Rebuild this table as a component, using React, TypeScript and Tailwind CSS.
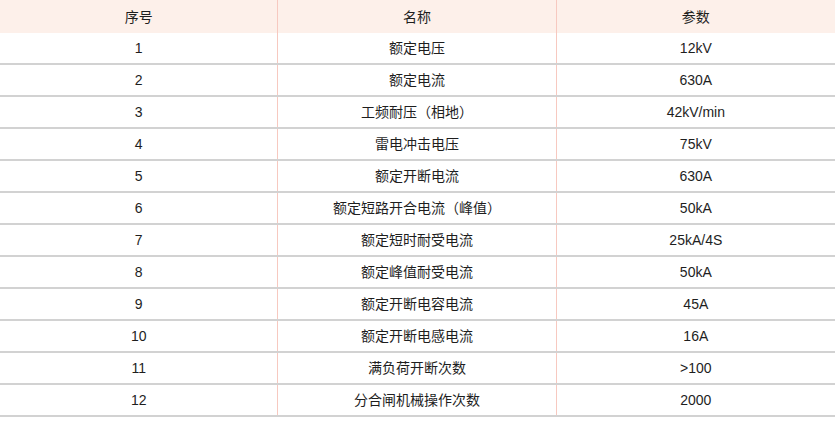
const rows: [string, string, string][] = [
  ["1", "额定电压", "12kV"],
  ["2", "额定电流", "630A"],
  ["3", "工频耐压（相地）", "42kV/min"],
  ["4", "雷电冲击电压", "75kV"],
  ["5", "额定开断电流", "630A"],
  ["6", "额定短路开合电流（峰值）", "50kA"],
  ["7", "额定短时耐受电流", "25kA/4S"],
  ["8", "额定峰值耐受电流", "50kA"],
  ["9", "额定开断电容电流", "45A"],
  ["10", "额定开断电感电流", "16A"],
  ["11", "满负荷开断次数", ">100"],
  ["12", "分合闸机械操作次数", "2000"],
];

const cell = "flex items-center justify-center pt-px border-r border-[#f7c9c0] last:border-r-0";

export default function App() {
  return (
    <div
      className="w-[835px] h-[421px] bg-white text-[14px] text-[#1e1e1e]"
      style={{ fontFamily: '"Liberation Sans", "Noto Sans CJK SC", sans-serif' }}
    >
      <div className="grid grid-cols-3 h-[33px] bg-[#fdf0ea]">
        <div className={cell}>序号</div>
        <div className={cell}>名称</div>
        <div className={cell}>参数</div>
      </div>
      {rows.map((r) => (
        <div key={r[0]} className="grid grid-cols-3 h-[32px] border-b-2 border-[#d2d2d2]">
          <div className={cell}>{r[0]}</div>
          <div className={cell}>{r[1]}</div>
          <div className={cell}>{r[2]}</div>
        </div>
      ))}
    </div>
  );
}
